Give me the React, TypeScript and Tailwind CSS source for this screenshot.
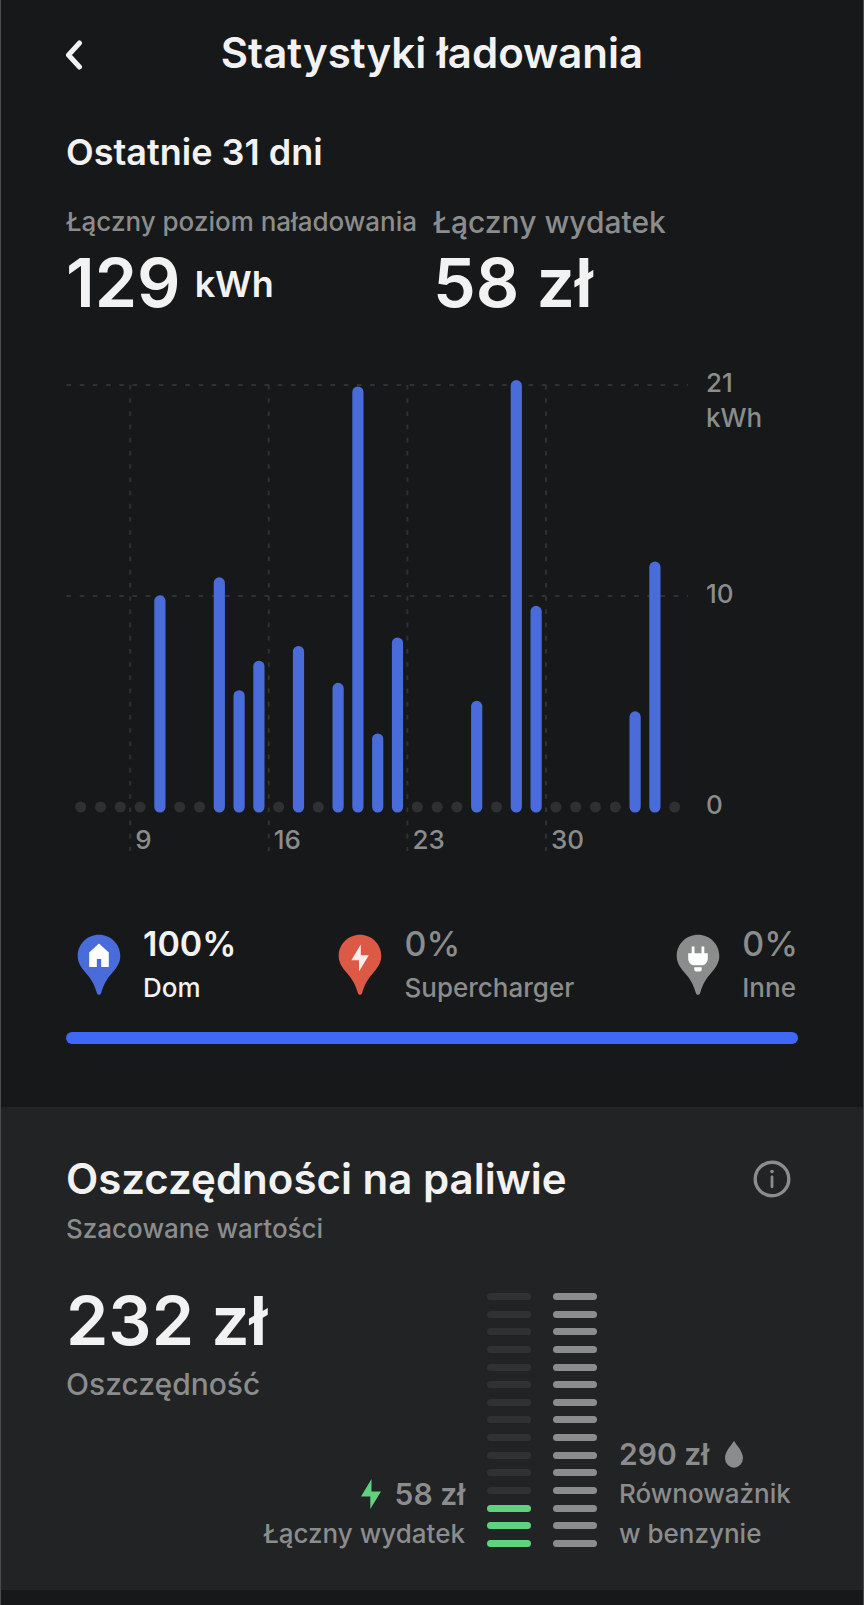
import type { ReactNode } from "react";

type Day = { index: number; kwh: number };

const charged: Day[] = [
  { index: 4, kwh: 10.3 },
  { index: 7, kwh: 11.15 },
  { index: 8, kwh: 5.8 },
  { index: 9, kwh: 7.2 },
  { index: 11, kwh: 7.9 },
  { index: 13, kwh: 6.15 },
  { index: 14, kwh: 20.2 },
  { index: 15, kwh: 3.75 },
  { index: 16, kwh: 8.3 },
  { index: 20, kwh: 5.3 },
  { index: 22, kwh: 20.5 },
  { index: 23, kwh: 9.8 },
  { index: 28, kwh: 4.8 },
  { index: 29, kwh: 11.9 },
];

const weeks = [
  { label: "9", x: 64.2 },
  { label: "16", x: 202.8 },
  { label: "23", x: 341.4 },
  { label: "30", x: 480 },
];

const STEP = 19.8;
const FIRST = 14.7;
const BASE = 441;
const KWH = 21.1;
const RADIUS = 5.6;

function ChargeChart() {
  const days = Array.from({ length: 31 }, (_, i) => charged.find((d) => d.index === i)?.kwh ?? 0);
  return (
    <svg viewBox="0 0 732 494" className="mt-[52px] block w-full" role="img" aria-label="Naładowano dziennie, kWh">
      <g stroke="#303133" strokeWidth="2" strokeDasharray="4.6 8.6">
        <path d="M0.5 19H622M0.5 230H622" />
        {weeks.map((w) => (
          <path key={w.label} d={`M${w.x} 19V485`} />
        ))}
      </g>
      {days.map((kwh, i) => {
        const x = FIRST + i * STEP;
        if (!kwh) return <circle key={i} cx={x} cy={BASE} r="5.5" fill="#2f3032" />;
        const top = BASE + RADIUS - kwh * KWH;
        return (
          <rect key={i} x={x - RADIUS} y={top} width={RADIUS * 2} height={BASE + RADIUS - top} rx={RADIUS} fill="#4a6cdb" />
        );
      })}
      <g fill="#8b8c8c" className="text-[26px] font-medium">
        {weeks.map((w) => (
          <text key={w.label} x={w.x + 5} y="483">
            {w.label}
          </text>
        ))}
        <text x="640" y="26">21</text>
        <text x="640" y="61">kWh</text>
        <text x="640" y="237">10</text>
        <text x="640" y="448">0</text>
      </g>
    </svg>
  );
}

function Pin({ color, children }: { color: string; children: ReactNode }) {
  return (
    <svg viewBox="0 0 44 62" className="mt-[2px] h-[62px] w-11 shrink-0" aria-hidden="true">
      <path
        d="M22 .8C10.200 .8.700 10.200.700 22c0 7 3.900 12 9 18C14.500 45.500 17.300 50.500 19.700 58.500c.4 1.600 1.100 2.300 2.300 2.300s1.900-.7 2.300-2.300C26.700 50.500 29.500 45.500 34.300 40c5.100-6 9-11 9-18C43.300 10.200 33.800.8 22 .8z"
        fill={color}
      />
      {children}
    </svg>
  );
}

const sources = [
  {
    share: "100%",
    name: "Dom",
    tone: "font-semibold text-[#f2f2f2]",
    color: "#4a6cdb",
    icon: <path d="M22 9.500 12.200 18.500V33h7.600v-8h4.400v8h7.600V18.500z" fill="#fff" />,
  },
  {
    share: "0%",
    name: "Supercharger",
    tone: "text-[#8b8c8c]",
    color: "#db5945",
    icon: <path d="M22.800 10.500 13.300 26.300H21V37.500L30.800 21.200H22.800z" fill="#fdeeec" />,
  },
  {
    share: "0%",
    name: "Inne",
    tone: "text-[#8b8c8c]",
    color: "#8b8c8c",
    icon: (
      <path
        d="M15.700 12.500h2.800v6.700h7V12.500h2.800v6.700h3.500v4.800c0 4.500-2.500 7.300-6.500 7.300h-6.600c-4 0-6.500-2.800-6.500-7.300v-4.800h3.500zM18.300 33.200h7.400v2.300c0 1.200-.8 2-2 2h-3.400c-1.200 0-2-.8-2-2z"
        fill="#fff"
      />
    ),
  },
];

function Segments({ filled, on, off }: { filled: number; on: string; off: string }) {
  return (
    <div className="mt-[5px] mb-[7px] flex h-[254px] w-11 flex-col justify-between">
      {Array.from({ length: 15 }, (_, i) => (
        <div key={i} className={`h-[7px] rounded-full ${i >= 15 - filled ? on : off}`} />
      ))}
    </div>
  );
}

export default function App() {
  return (
    <div className="min-h-screen border-x border-[#4b4c4d] bg-[#17181a] font-['Inter',sans-serif] font-medium text-[#f2f2f2]">
      <header className="grid h-[105px] grid-cols-[44px_1fr_44px] items-center px-[65px]">
        <button type="button" aria-label="Wstecz" className="mt-1 h-11 w-11">
          <svg viewBox="0 0 18 30" className="h-[30px] w-[18px]" fill="none" stroke="currentColor" strokeWidth="5" strokeLinecap="round" strokeLinejoin="round">
            <path d="M13.500 3 2.500 15 13.500 27" />
          </svg>
        </button>
        <h1 className="text-center text-[42px] leading-[48px] font-semibold whitespace-nowrap">Statystyki ładowania</h1>
      </header>

      <main>
        <section className="px-[65px] pt-[27px] pb-[63px]">
          <h2 className="text-[36px] leading-10 font-semibold">Ostatnie 31 dni</h2>
          <dl className="mt-[34px] flex gap-4">
            <div>
              <dt className="text-[26px] leading-8 text-[#8b8c8c]">Łączny poziom naładowania</dt>
              <dd className="mt-3 flex items-center gap-[14px] text-[68px] leading-16 font-semibold">
                129 <span className="pt-1 text-[36px] leading-10">kWh</span>
              </dd>
            </div>
            <div>
              <dt className="text-[30px] leading-8 text-[#8b8c8c]">Łączny wydatek</dt>
              <dd className="mt-3 text-[68px] leading-16 font-semibold">58 zł</dd>
            </div>
          </dl>

          <ChargeChart />

          <ul className="mt-16 flex justify-between pl-[11px]">
            {sources.map((s) => (
              <li key={s.name} className={`flex items-center gap-[22px] ${s.tone}`}>
                <Pin color={s.color}>{s.icon}</Pin>
                <div>
                  <p className="text-[34px] leading-10">{s.share}</p>
                  <p className="mt-2 text-[26px] leading-8 font-medium">{s.name}</p>
                </div>
              </li>
            ))}
          </ul>
          <div className="mt-7 h-3 rounded-full bg-[#4068f7]" />
        </section>

        <section className="bg-[#222325] px-[65px] pt-12 pb-9">
          <div className="flex items-center justify-between pr-[7px]">
            <h2 className="text-[42px] leading-[48px] font-semibold">Oszczędności na paliwie</h2>
            <button type="button" aria-label="Informacje" className="text-[#8b8c8c]">
              <svg viewBox="0 0 38 38" className="h-[38px] w-[38px]" fill="none" stroke="currentColor" strokeLinecap="round">
                <circle cx="19" cy="19" r="16.800" strokeWidth="3.400" />
                <path d="M19 16.800v10" strokeWidth="2.800" />
                <circle cx="19" cy="11.500" r="1.800" fill="currentColor" stroke="none" />
              </svg>
            </button>
          </div>
          <p className="mt-[10px] text-[26px] leading-8 text-[#8b8c8c]">Szacowane wartości</p>

          <div className="mt-[43px] flex items-end gap-[22px] text-[#8b8c8c]">
            <div className="flex flex-1 flex-col justify-between self-stretch">
              <div>
                <p className="text-[68px] leading-16 font-semibold text-[#f2f2f2]">232 zł</p>
                <p className="mt-3 text-[30px] leading-10">Oszczędność</p>
              </div>
              <div className="flex flex-col items-end">
                <p className="flex items-center gap-[14px] text-[30px] leading-10 font-semibold">
                  <svg viewBox="0 0 20 30" className="h-[30px] w-5" aria-hidden="true">
                    <path d="M10.500 0 0 17.500h9.300V30L20 12.500h-9.500z" fill="#5fd27f" />
                  </svg>
                  58 zł
                </p>
                <p className="text-[26px] leading-10">Łączny wydatek</p>
              </div>
            </div>
            <Segments filled={3} on="bg-[#5fd27f]" off="bg-[#303132]" />
            <Segments filled={15} on="bg-[#8b8c8c]" off="bg-[#303132]" />
            <div className="w-[179px]">
              <p className="flex items-center gap-4 text-[30px] leading-10 font-semibold">
                290 zł
                <svg viewBox="0 0 18 27" className="h-[27px] w-[18px]" aria-hidden="true">
                  <path d="M9 0c2.500 4 9 10.500 9 17a9 9.700 0 0 1-18 0C0 10.500 6.500 4 9 0z" fill="currentColor" />
                </svg>
              </p>
              <p className="text-[26px] leading-10">
                Równoważnik
                <br />w benzynie
              </p>
            </div>
          </div>
        </section>
      </main>
    </div>
  );
}
